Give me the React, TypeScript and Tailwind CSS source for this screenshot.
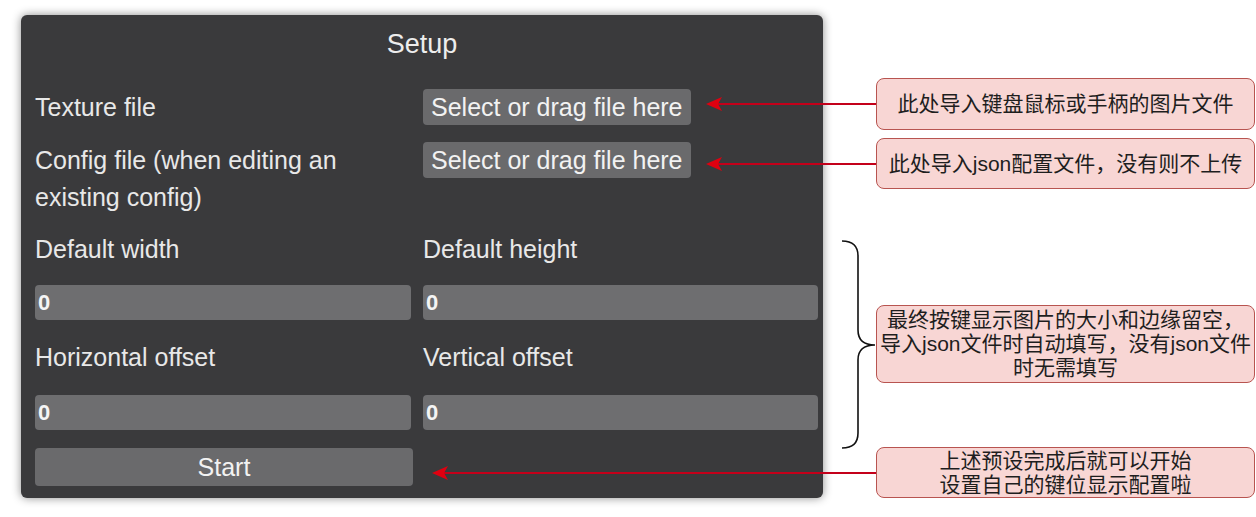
import React from "react";

// ============================================================================
// Setup panel with annotations
// ============================================================================

const uiFont = { fontFamily: '"Liberation Sans", Arial, sans-serif' };
const noteFont = {
  fontFamily: '"Liberation Sans", "Noto Sans CJK SC", sans-serif',
};

function FileButton() {
  return (
    <button className="h-[36px] self-start justify-self-start rounded-[4px] bg-[#6a6a6c] px-[8px] text-[25px] leading-[36px] text-[#f2f2f2]">
      Select or drag file here
    </button>
  );
}

function NumberInput() {
  return (
    <input
      readOnly
      defaultValue="0"
      className="h-[35px] w-full rounded-[4px] bg-[#6e6e70] pl-[3px] text-[22px] font-bold text-[#f4f4f4] outline-none"
      style={uiFont}
    />
  );
}

function Note({
  top,
  height,
  children,
}: {
  top: number;
  height: number;
  children: React.ReactNode;
}) {
  return (
    <div
      className="absolute left-[876px] flex w-[379px] items-center justify-center rounded-[8px] border border-[#b85450] bg-[#f8d6d4] text-center text-[21px] leading-[24px] text-[#1e1e1e]"
      style={{ top, height, ...noteFont }}
    >
      {children}
    </div>
  );
}

export default function App() {
  return (
    <div className="relative h-[517px] w-[1256px] overflow-hidden bg-white">
      {/* 设置面板 */}
      <div
        className="ml-[21px] mt-[15px] flex w-[802px] flex-col rounded-[6px] bg-[#3a3a3c] pb-[12px] pl-[14px] pr-[5px] text-[25px] leading-[37px] text-[#e8e8e8] shadow-[0_0_10px_rgba(0,0,0,0.45)]"
        style={uiFont}
      >
        <div className="-ml-[14px] -mr-[5px] flex h-[58px] items-center justify-center text-[27px] text-[#ededed]">
          Setup
        </div>

        <div className="mt-[16px] grid grid-cols-[376px_395px] gap-x-[12px]">
          <div className="flex h-[36px] items-center">Texture file</div>
          <FileButton />
        </div>

        <div className="mt-[17px] grid grid-cols-[376px_395px] gap-x-[12px]">
          <div>Config file (when editing an existing config)</div>
          <FileButton />
        </div>

        <div className="mt-[15px] grid grid-cols-[376px_395px] gap-x-[12px]">
          <div>Default width</div>
          <div>Default height</div>
        </div>
        <div className="mt-[17px] grid grid-cols-[376px_395px] gap-x-[12px]">
          <NumberInput />
          <NumberInput />
        </div>

        <div className="mt-[19px] grid grid-cols-[376px_395px] gap-x-[12px]">
          <div>Horizontal offset</div>
          <div>Vertical offset</div>
        </div>
        <div className="mt-[19px] grid grid-cols-[376px_395px] gap-x-[12px]">
          <NumberInput />
          <NumberInput />
        </div>

        <div className="mt-[18px] grid grid-cols-[378px_395px] gap-x-[10px]">
          <button className="h-[38px] rounded-[4px] bg-[#6a6a6c] text-[25px] text-[#f2f2f2]">
            Start
          </button>
        </div>
      </div>

      {/* 箭头与括号 */}
      <svg
        className="pointer-events-none absolute left-0 top-0"
        width="1256"
        height="517"
        viewBox="0 0 1256 517"
      >
        <g stroke="#c4001a" strokeWidth="2" fill="none">
          <line x1="876" y1="104" x2="716" y2="104" />
          <line x1="876" y1="164" x2="716" y2="164" />
          <line x1="877" y1="473" x2="442" y2="473" />
        </g>
        <g fill="#e00010">
          <path d="M706 104 L722 97 L718 104 L722 111 Z" />
          <path d="M706 164 L722 157 L718 164 L722 171 Z" />
          <path d="M432 473 L448 466 L444 473 L448 480 Z" />
        </g>
        <path
          d="M842 241 Q858 241 858 256 L858 330 Q858 345 875 345 Q858 345 858 360 L858 433 Q858 448 842 448"
          stroke="#111"
          strokeWidth="1.6"
          fill="none"
        />
      </svg>

      {/* 说明 */}
      <Note top={78} height={52}>
        此处导入键盘鼠标或手柄的图片文件
      </Note>
      <Note top={138} height={51}>
        此处导入json配置文件，没有则不上传
      </Note>
      <Note top={305} height={78}>
        <span>
          最终按键显示图片的大小和边缘留空，
          <br />
          导入json文件时自动填写，没有json文件
          <br />
          时无需填写
        </span>
      </Note>
      <Note top={447} height={51}>
        <span>
          上述预设完成后就可以开始
          <br />
          设置自己的键位显示配置啦
        </span>
      </Note>
    </div>
  );
}
